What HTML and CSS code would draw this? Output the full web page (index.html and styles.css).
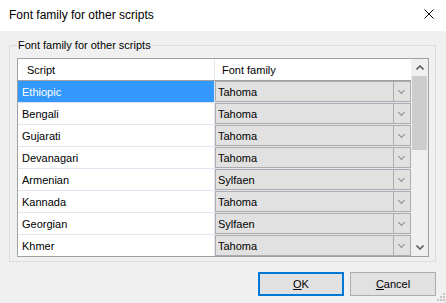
FILE: index.html
```html
<!DOCTYPE html>
<html lang="en">
<head>
  <meta charset="UTF-8">
  <title>Font family for other scripts</title>
  <link rel="stylesheet" href="styles.css">
</head>
<body>
  <div class="dialog">
    <div class="titlebar">
      <span class="title">Font family for other scripts</span>
      <svg class="close" width="10" height="10" viewBox="0 0 10 10">
        <path d="M0.5 0.5 L9.5 9.5 M9.5 0.5 L0.5 9.5" stroke="#000" stroke-width="1" fill="none"/>
      </svg>
    </div>

    <fieldset class="group">
      <legend>Font family for other scripts</legend>
      <div class="grid">
        <div class="table">
          <div class="row head">
            <div class="cell script">Script</div>
            <div class="cell font">Font family</div>
          </div>
          <div class="row selected">
            <div class="cell script">Ethiopic</div>
            <div class="cell font"><div class="combo"><span>Tahoma</span><i class="drop"></i></div></div>
          </div>
          <div class="row">
            <div class="cell script">Bengali</div>
            <div class="cell font"><div class="combo"><span>Tahoma</span><i class="drop"></i></div></div>
          </div>
          <div class="row">
            <div class="cell script">Gujarati</div>
            <div class="cell font"><div class="combo"><span>Tahoma</span><i class="drop"></i></div></div>
          </div>
          <div class="row">
            <div class="cell script">Devanagari</div>
            <div class="cell font"><div class="combo"><span>Tahoma</span><i class="drop"></i></div></div>
          </div>
          <div class="row">
            <div class="cell script">Armenian</div>
            <div class="cell font"><div class="combo"><span>Sylfaen</span><i class="drop"></i></div></div>
          </div>
          <div class="row">
            <div class="cell script">Kannada</div>
            <div class="cell font"><div class="combo"><span>Tahoma</span><i class="drop"></i></div></div>
          </div>
          <div class="row">
            <div class="cell script">Georgian</div>
            <div class="cell font"><div class="combo"><span>Sylfaen</span><i class="drop"></i></div></div>
          </div>
          <div class="row">
            <div class="cell script">Khmer</div>
            <div class="cell font"><div class="combo"><span>Tahoma</span><i class="drop"></i></div></div>
          </div>
        </div>
        <div class="scrollbar">
          <div class="arrow">
            <svg width="8" height="5" viewBox="0 0 8 5"><path d="M0.5 4.5 L4 1 L7.5 4.5" stroke="#606060" stroke-width="1.6" fill="none"/></svg>
          </div>
          <div class="track"><div class="thumb"></div></div>
          <div class="arrow">
            <svg width="8" height="5" viewBox="0 0 8 5"><path d="M0.5 0.5 L4 4 L7.5 0.5" stroke="#606060" stroke-width="1.6" fill="none"/></svg>
          </div>
        </div>
      </div>
    </fieldset>

    <div class="buttons">
      <button class="default"><u>O</u>K</button>
      <button><u>C</u>ancel</button>
    </div>

    <svg class="grip" width="8" height="8" viewBox="0 0 8 8">
      <rect x="6" y="0" width="2" height="2" fill="#c4c4c4"/>
      <rect x="3" y="3" width="2" height="2" fill="#c4c4c4"/>
      <rect x="6" y="3" width="2" height="2" fill="#c4c4c4"/>
      <rect x="0" y="6" width="2" height="2" fill="#c4c4c4"/>
      <rect x="3" y="6" width="2" height="2" fill="#c4c4c4"/>
      <rect x="6" y="6" width="2" height="2" fill="#c4c4c4"/>
    </svg>
  </div>
</body>
</html>
```

FILE: styles.css
```css
body {
  margin: 0;
  font-family: 'Liberation Sans', Arial, sans-serif;
  font-size: 11px;
  color: #000;
  background: #f0f0f0;
}
.dialog {
  position: relative;
  width: 446px;
  height: 303px;
  background: #f0f0f0;
  display: flex;
  flex-direction: column;
  overflow: hidden;
}
.titlebar {
  height: 31px;
  background: #fff;
  display: flex;
  align-items: center;
  justify-content: space-between;
  padding: 0 12px 0 9px;
  flex-shrink: 0;
}
.title {
  font-size: 12px;
  color: #000;
  padding-bottom: 1px;
}
.close {
  margin-bottom: 3px;
}
.group {
  margin: 8px 10px 0 9px;
  padding: 7px 7px 4px 7px;
  border: 1px solid #dcdcdc;
  min-width: 0;
}
.group legend {
  padding: 0 1px;
  line-height: 12px;
}
.grid {
  display: flex;
  width: 410px;
  height: 197px;
  border: 1px solid #a0a0a0;
  background: #fff;
  overflow: hidden;
}
.table {
  width: 393px;
  display: flex;
  flex-direction: column;
}
.row {
  display: flex;
  height: 21px;
  border-bottom: 1px solid #e3e3f2;
  flex-shrink: 0;
}
.row.head {
  border-bottom: 1px solid #a0a0a0;
}
.cell {
  display: flex;
  align-items: center;
  height: 21px;
}
.cell.script {
  width: 192px;
  padding-left: 4px;
  border-right: 1px solid #e3e3f2;
}
.cell.font {
  width: 196px;
}
.head .cell.script {
  padding-left: 9px;
  width: 187px;
  border-right: 1px solid #e5e5e5;
}
.head .cell.font {
  padding-left: 7px;
  width: 189px;
}
.selected .cell.script {
  background: #3399ff;
  color: #fff;
}
.combo {
  display: flex;
  align-items: center;
  width: 194px;
  height: 19px;
  background: #e1e1e1;
  border: 1px solid #adadad;
}
.combo span {
  flex: 1;
  padding-left: 2px;
}
.drop {
  width: 16px;
  height: 19px;
  border-left: 1px solid #adadad;
  position: relative;
}
.drop::after {
  content: '';
  position: absolute;
  left: 5px;
  top: 6px;
  width: 4px;
  height: 4px;
  border-right: 1px solid #8a8a8a;
  border-bottom: 1px solid #8a8a8a;
  transform: rotate(45deg);
}
.scrollbar {
  width: 17px;
  background: #f0f0f0;
  display: flex;
  flex-direction: column;
}
.arrow {
  height: 17px;
  display: flex;
  align-items: center;
  justify-content: center;
}
.track {
  flex: 1;
  padding: 0 1px;
}
.thumb {
  height: 74px;
  background: #cdcdcd;
}
.buttons {
  display: flex;
  justify-content: flex-end;
  gap: 6px;
  margin-top: 10px;
  padding-right: 10px;
}
button {
  width: 86px;
  height: 24px;
  background: #e1e1e1;
  border: 1px solid #adadad;
  font-family: 'Liberation Sans', Arial, sans-serif;
  font-size: 11px;
  color: #000;
  padding: 0;
}
button.default {
  border: 2px solid #0078d7;
}
.grip {
  position: absolute;
  right: 1px;
  bottom: 2px;
}
```
